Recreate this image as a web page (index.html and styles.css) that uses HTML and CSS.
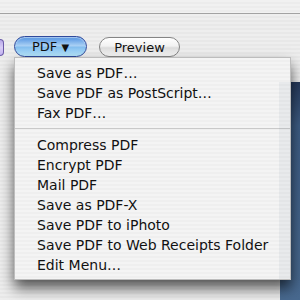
FILE: index.html
```html
<!DOCTYPE html>
<html lang="en">
<head>
    <meta charset="UTF-8">
    <title>Print - PDF menu</title>
    <link rel="stylesheet" href="styles.css">
</head>
<body>
    <div class="titlebar"></div>
    <div class="rule"></div>
    <div class="main">
        <div class="window">
            <div class="toolbar">
                <span class="btn-edge"></span>
                <button class="btn btn-pdf">PDF <span class="arrow">&#9660;</span></button>
                <button class="btn btn-preview">Preview</button>
            </div>
        </div>
        <div class="side">
            <div class="side-top"></div>
            <div class="desktop"></div>
        </div>
    </div>

    <ul class="menu">
        <li>Save as PDF…</li>
        <li>Save PDF as PostScript…</li>
        <li>Fax PDF…</li>
        <li class="sep"></li>
        <li>Compress PDF</li>
        <li>Encrypt PDF</li>
        <li>Mail PDF</li>
        <li>Save as PDF-X</li>
        <li>Save PDF to iPhoto</li>
        <li>Save PDF to Web Receipts Folder</li>
        <li>Edit Menu…</li>
    </ul>
</body>
</html>
```

FILE: styles.css
```css
/* Basic Styles */
body {
    margin: 0;
    width: 300px;
    height: 300px;
    overflow: hidden;
    font-family: 'DejaVu Sans', 'Noto Sans', sans-serif;
    background: repeating-linear-gradient(#efefef 0 2px, #e9e9e9 2px 4px);
    position: relative;
}

.titlebar {
    height: 13px;
    background: repeating-linear-gradient(#f1f1f1 0 2px, #ececec 2px 4px);
}

.rule {
    height: 1px;
    background-color: #a2a2a2;
}

.main {
    display: flex;
    height: 286px;
}

.window {
    flex: 1;
    background: repeating-linear-gradient(#eeeeee 0 2px, #e8e8e8 2px 4px);
}

.side {
    width: 20px;
    display: flex;
    flex-direction: column;
}

.side-top {
    height: 68px;
    background: repeating-linear-gradient(#eeeeee 0 2px, #e8e8e8 2px 4px);
}

.desktop {
    flex: 1;
    background: linear-gradient(#26395a, #3d5c83 20%, #48698f);
}

/* Toolbar buttons */
.toolbar {
    display: flex;
    align-items: flex-start;
    padding-top: 22px;
}

.btn-edge {
    width: 3px;
    height: 15px;
    margin-top: 3px;
    border-radius: 0 8px 8px 0;
    border: 1px solid #6a5aa8;
    border-left: none;
    background: linear-gradient(#b8a8e8, #d8ccf6 50%, #c2b2f0);
}

.btn {
    font-family: inherit;
    font-size: 13px;
    color: #111;
    padding: 0;
    border-radius: 11px;
    box-sizing: border-box;
}

.btn-pdf {
    margin-left: 10px;
    width: 73px;
    height: 21px;
    border: 1px solid #2f4a9c;
    background: linear-gradient(#4d8fe0 0%, #a8cff4 45%, #86c0f0 55%, #b6e6fc 100%);
    box-shadow: inset 0 1px 1px rgba(255, 255, 255, 0.5);
}

.arrow {
    font-size: 10px;
}

.btn-preview {
    margin-left: 12px;
    margin-top: 1px;
    width: 81px;
    height: 20px;
    border: 1px solid #858585;
    background: linear-gradient(#ffffff 0%, #f2f2f2 45%, #dcdcdc 55%, #f8f8f8 100%);
}

/* Dropdown */
.menu {
    position: absolute;
    top: 57px;
    left: 14px;
    width: 277px;
    height: 223px;
    margin: 0;
    padding: 5px 0 0;
    box-sizing: border-box;
    list-style: none;
    border: 1px solid #bdbdbd;
    background: repeating-linear-gradient(#f4f4f4 0 2px, #efefef 2px 4px);
    box-shadow: 0 8px 13px rgba(0, 0, 0, 0.65);
}

.menu::after {
    content: '';
    position: absolute;
    top: 24px;
    right: 0;
    bottom: 0;
    width: 11px;
    background-color: rgba(50, 80, 120, 0.06);
}

.menu li {
    height: 20px;
    line-height: 20px;
    padding-left: 22px;
    font-size: 14px;
    color: #111;
    white-space: nowrap;
}

.menu .sep {
    height: 12px;
    padding: 0;
    background: linear-gradient(transparent 5px, #c9c9c9 5px 6px, transparent 6px);
}
```
